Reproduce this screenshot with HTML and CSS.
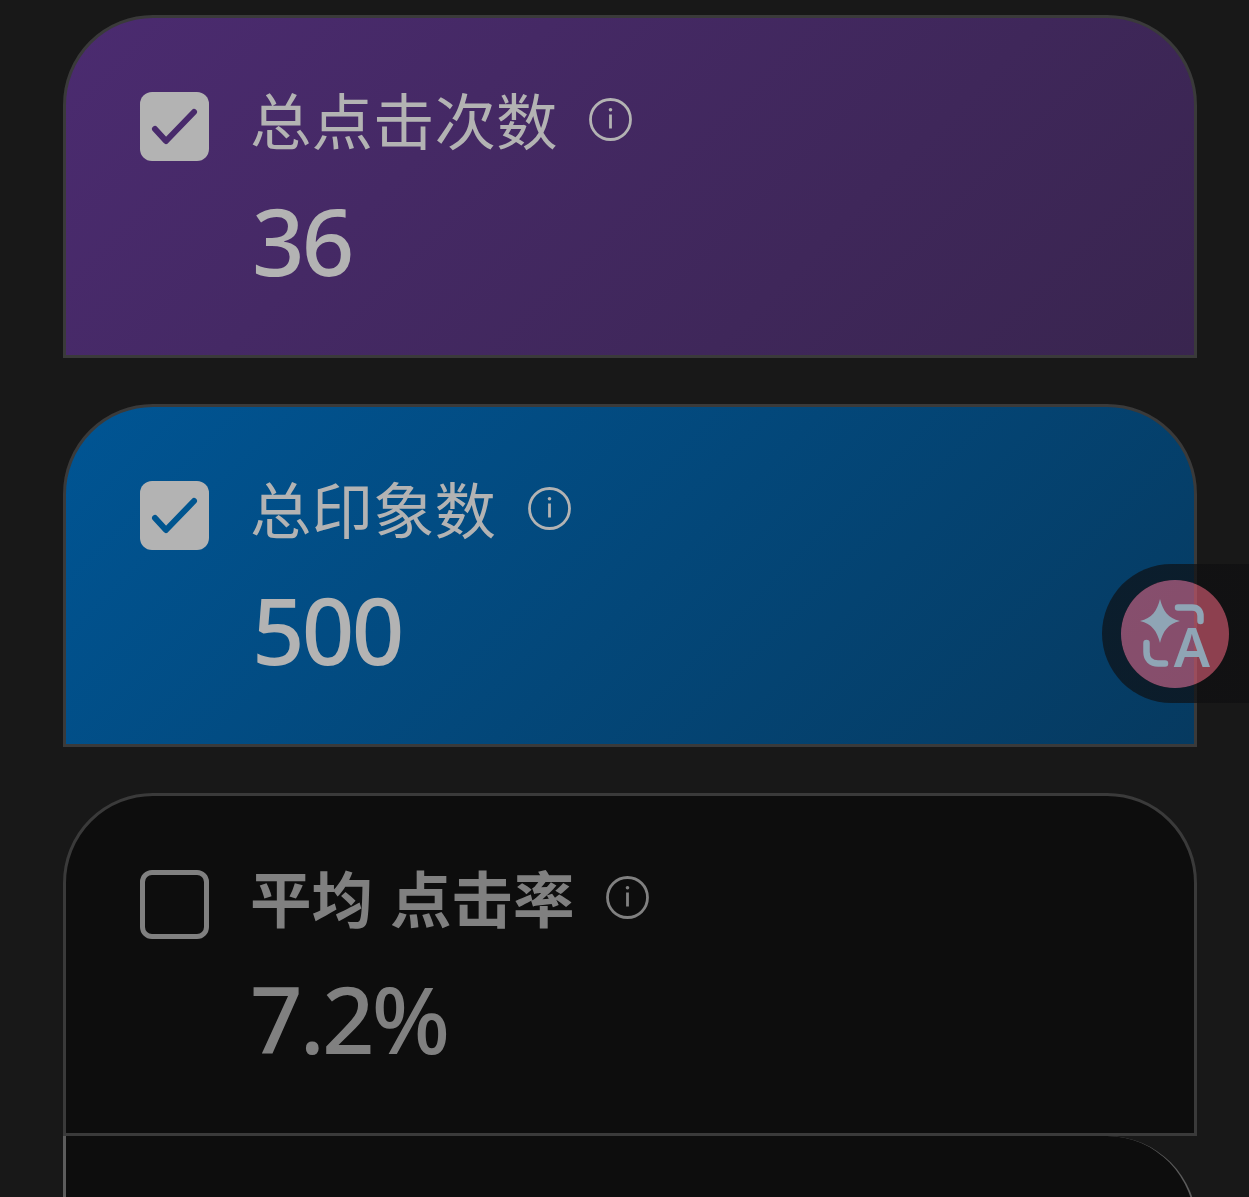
FILE: index.html
```html
<!DOCTYPE html>
<html lang="zh-CN">
<head>
  <meta charset="UTF-8">
  <meta name="viewport" content="width=device-width, initial-scale=1.0">
  <title>效果</title>
  <link rel="stylesheet" href="styles.css">
</head>
<body>
  <div class="metric-list">
    <div class="metric-card card-clicks">
      <div class="check check-on">
        <svg viewBox="0 0 69 69" width="69" height="69"><path d="M15 37L26 49L54 20"/></svg>
      </div>
      <div class="metric-body">
        <div class="metric-title">
          <span>总点击次数</span>
          <svg class="info" viewBox="0 0 43 43" width="43" height="43"><circle cx="21.5" cy="21.5" r="20"/><path d="M21.5 16.500V30.500"/><circle class="dot" cx="21.500" cy="11.800" r="1.800"/></svg>
        </div>
        <div class="metric-value">36</div>
      </div>
    </div>

    <div class="metric-card card-views">
      <div class="check check-on">
        <svg viewBox="0 0 69 69" width="69" height="69"><path d="M15 37L26 49L54 20"/></svg>
      </div>
      <div class="metric-body">
        <div class="metric-title">
          <span>总印象数</span>
          <svg class="info" viewBox="0 0 43 43" width="43" height="43"><circle cx="21.5" cy="21.5" r="20"/><path d="M21.5 16.500V30.500"/><circle class="dot" cx="21.500" cy="11.800" r="1.800"/></svg>
        </div>
        <div class="metric-value">500</div>
      </div>
    </div>

    <div class="metric-card card-off card-rate">
      <div class="check"></div>
      <div class="metric-body">
        <div class="metric-title">
          <span class="strong">平均 点击率</span>
          <svg class="info" viewBox="0 0 43 43" width="43" height="43"><circle cx="21.5" cy="21.5" r="20"/><path d="M21.5 16.500V30.500"/><circle class="dot" cx="21.500" cy="11.800" r="1.800"/></svg>
        </div>
        <div class="metric-value">7.2%</div>
      </div>
    </div>

    <div class="metric-card card-off card-next"></div>
  </div>

  <div class="translate-dock">
    <div class="translate-btn">
      <svg viewBox="0 0 108 108" width="108" height="108">
        <path class="spark" d="M39 19C42 31 47 38 59 41C47 44 42 51 39 63C36 51 31 44 19 41C31 38 36 31 39 19Z"/>
        <path class="bracket" d="M57 27.500H71C77 27.500 79.500 31 79.500 36V41"/>
        <path class="bracket" d="M25.500 63V72C25.500 79 30 83.500 37 83.500H44"/>
        <text x="71" y="87">A</text>
      </svg>
    </div>
  </div>
</body>
</html>
```

FILE: styles.css
```css
html, body {
  height: 100%;
}

body {
  margin: 0;
  overflow: hidden;
  background-color: #181818;
  font-family: "Noto Sans", "Noto Sans CJK SC", sans-serif;
  position: relative;
}

.metric-list {
  display: flex;
  flex-direction: column;
  height: 1182px;
  padding: 15px 52px 0 63px;
}

.metric-card {
  box-sizing: border-box;
  flex-shrink: 0;
  height: 343px;
  margin-bottom: 46px;
  padding: 74px 74px 0;
  display: flex;
  gap: 41px;
  border: 3px solid #3a3a3a;
  border-radius: 90px 90px 0 0;
  color: #b3b3b3;
}

.card-clicks {
  background: linear-gradient(135deg, #4b2b70, #39254f);
}

.card-views {
  background: linear-gradient(135deg, #005594, #063a60);
}

.card-off {
  background-color: #0d0d0d;
  color: #808080;
}

.card-rate {
  margin-bottom: 0;
}

.card-next {
  border-width: 0 2px 0 3px;
  border-color: #5c5c5c;
  border-radius: 0 90px 0 0;
}

.check {
  box-sizing: border-box;
  width: 69px;
  height: 69px;
  flex-shrink: 0;
  border: 5.500px solid #808080;
  border-radius: 12px;
}

.check-on {
  border: 0;
  background-color: #b3b3b3;
}

.check svg {
  display: block;
  fill: none;
  stroke-width: 6;
  stroke-linecap: round;
  stroke-linejoin: round;
}

.card-clicks .check svg {
  stroke: #482a6b;
}

.card-views .check svg {
  stroke: #00558f;
}

.metric-title {
  display: flex;
  align-items: center;
  gap: 31.500px;
  height: 60px;
  margin-top: -3px;
  font-family: "Noto Sans CJK SC", sans-serif;
  font-size: 61.500px;
  line-height: 60px;
}

.strong {
  font-weight: 700;
  word-spacing: 3px;
}

.info {
  flex-shrink: 0;
  fill: none;
  stroke: currentColor;
  stroke-width: 2.800;
}

.info .dot {
  fill: currentColor;
  stroke: none;
}

.metric-value {
  margin: 46px 0 0 2px;
  font-size: 92px;
  font-weight: 550;
  line-height: 92px;
  letter-spacing: -2.800px;
}

.card-rate .metric-value {
  margin-left: 0;
}

.translate-dock {
  position: absolute;
  top: 564px;
  right: 0;
  width: 147px;
  height: 139px;
  border-radius: 70px 0 0 70px;
  background: radial-gradient(circle 54px at 73px 70px, transparent 53.500px, rgba(14, 14, 16, 0.68) 54px);
}

.translate-btn {
  position: absolute;
  top: 16px;
  left: 19px;
  width: 108px;
  height: 108px;
  border-radius: 50%;
  background-color: rgba(211, 89, 113, 0.63);
}

.translate-btn svg {
  display: block;
}

.spark {
  fill: #8fa5b5;
}

.bracket {
  fill: none;
  stroke: #8fa5b5;
  stroke-width: 6.500;
  stroke-linecap: round;
}

.translate-btn text {
  fill: #8fa5b5;
  font-family: "Noto Sans", sans-serif;
  font-size: 54px;
  font-weight: 600;
  text-anchor: middle;
}
```
